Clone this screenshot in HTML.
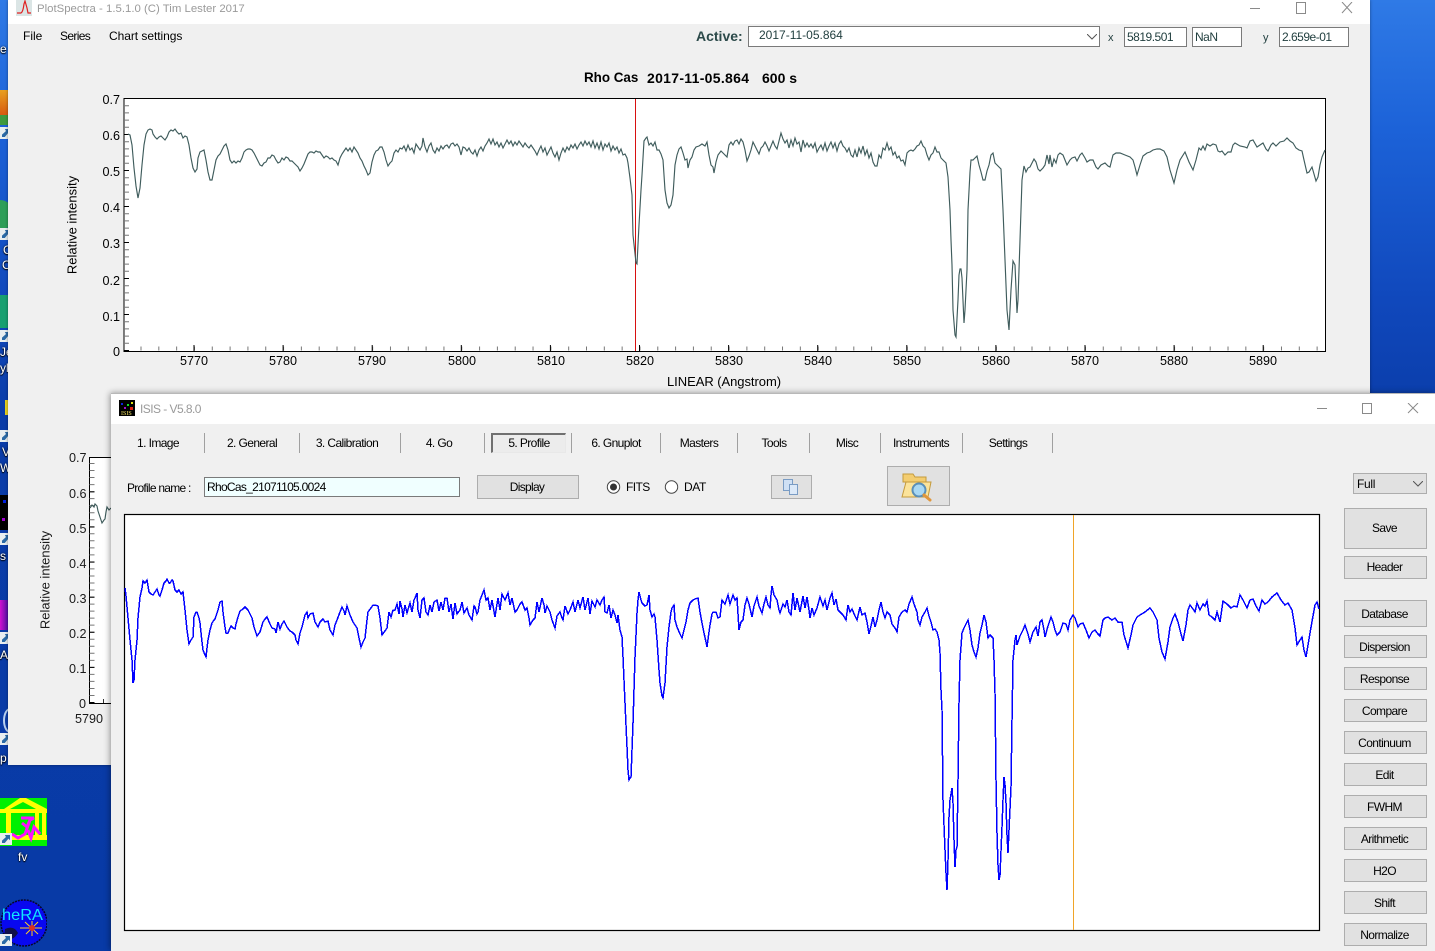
<!DOCTYPE html>
<html lang="en">
<head>
<meta charset="utf-8">
<title>PlotSpectra and ISIS</title>
<style>
html,body{margin:0;padding:0;width:1435px;height:951px;overflow:hidden;background:#0a3ca8;font-family:"Liberation Sans",sans-serif;color:#000}
div,span{position:absolute;box-sizing:border-box;white-space:pre}
svg{position:absolute}
#root{left:0;top:0;width:1435px;height:951px;overflow:hidden}
#bg{left:0;top:0;width:1435px;height:951px;background:linear-gradient(180deg,#2f7ae6 0,#1c62d8 130px,#1048bc 300px,#0a3ca8 420px,#083aa6 951px)}
.dk{color:#fff;font-size:12px;text-shadow:0 0 2px #000,0 1px 1px #000;line-height:14px}
.sc{width:12px;height:12px;background:#e8eef0;left:0}
.sc:after{content:"";position:absolute;left:2px;top:2px;width:8px;height:8px;background:#2b6aa6;clip-path:polygon(35% 0,100% 0,100% 65%,80% 45%,35% 100%,0 100%,0 70%,50% 25%)}
#w1{left:8px;top:0;width:1362px;height:765px;background:#f0f0f0;box-shadow:0 0 3px rgba(0,0,0,.4)}
#w2{left:111px;top:394px;width:1324px;height:557px;background:#f0f0f0;box-shadow:0 -1px 0 #b8b8b8,-1px -1px 6px rgba(0,0,0,.4)}
.tb{left:0;top:0;height:24px;background:#fff}
.t{color:#000;font-size:12px;line-height:14px}
.ax{font-size:13px;line-height:15px;color:#000}
.tk{font-size:12.6px;line-height:15px;color:#000}
.ct{transform:translateX(-50%)}
.box{background:#fff;border:1px solid #7a7a7a;font-size:12px;line-height:18px;color:#1f3d3d;padding-left:2px;letter-spacing:-.5px}
.btn{background:#e1e1e1;border:1px solid #adadad;left:1233px;width:83px;font-size:12px;letter-spacing:-.6px;text-align:center;color:#000;height:23px;line-height:23px;padding-right:2px}
.tab{top:42px;font-size:12px;line-height:14px;letter-spacing:-.6px;transform:translateX(-50%)}
.sep{top:39px;width:1px;height:20px;background:#a0a0a0}
.hd{top:70px;font-weight:bold;line-height:16px}
</style>
</head>
<body>
<div id="root">
<div id="bg"></div>

<div class="dk" style="left:0;top:42px">e</div>
<div style="left:0;top:90px;width:8px;height:25px;background:linear-gradient(180deg,#e9a020,#d85a10)"></div>
<div style="left:0;top:115px;width:8px;height:10px;background:#3f9a3f"></div>
<div class="sc" style="top:127px"></div>
<div style="left:-14px;top:200px;width:28px;height:30px;border-radius:50%;background:#2e9e58"></div>
<div class="sc" style="top:228px"></div>
<div class="dk" style="left:3px;top:243px">C</div>
<div class="dk" style="left:2px;top:258px">C</div>
<div style="left:0;top:295px;width:8px;height:33px;background:#18a070"></div>
<div class="sc" style="top:330px"></div>
<div class="dk" style="left:0;top:345px">Je</div>
<div class="dk" style="left:0;top:361px">yl</div>
<div style="left:5px;top:400px;width:3px;height:15px;background:#e8d020"></div>
<div class="sc" style="top:430px"></div>
<div class="dk" style="left:2px;top:445px">V</div>
<div class="dk" style="left:0;top:461px">Wo</div>
<div style="left:0;top:495px;width:8px;height:35px;background:#000"></div>
<div style="left:3px;top:500px;width:3px;height:3px;background:#0020e0"></div>
<div style="left:2px;top:518px;width:3px;height:3px;background:#a000d0"></div>
<div class="sc" style="top:533px"></div>
<div class="dk" style="left:0;top:549px">s</div>
<div style="left:0;top:600px;width:8px;height:30px;background:linear-gradient(90deg,#d010d0,#5010a0)"></div>
<div class="sc" style="top:632px"></div>
<div class="dk" style="left:0;top:648px">A</div>
<div style="left:3px;top:708px;width:14px;height:25px;border-radius:50%;border:2px solid #b8d0f0"></div>
<div class="sc" style="top:733px"></div>
<div class="dk" style="left:0;top:751px">p</div>

<svg style="left:0;top:798px" width="47" height="48" viewBox="0 0 47 48">
<rect width="47" height="48" fill="#00f000"/>
<path d="M0 11 L4 11 L20 0 L26 0 L47 11 L47 15 L0 15Z" fill="#ffff00"/>
<path d="M10 11 L23 4 L36 11Z" fill="#00f000"/>
<rect x="6" y="15" width="5" height="23" fill="#ffff00"/><rect x="35" y="15" width="4" height="23" fill="#ffff00"/><rect x="42" y="15" width="4" height="23" fill="#ffff00"/>
<rect y="37" width="47" height="5" fill="#ffff00"/>
<path d="M21 20 H34 L30 22 L27 29 L22 25 M30 22 L25 36 L18 40 L12 36 M28 32 L31 40 L34 29 L40 36" fill="none" stroke="#ff10ff" stroke-width="3"/>
</svg>
<div class="sc" style="top:833px"></div>
<div class="dk" style="left:18px;top:850px">fv</div>
<svg style="left:0;top:899px" width="47" height="48" viewBox="0 0 47 48">
<circle cx="24" cy="24" r="23" fill="#0808f0" stroke="#06062a" stroke-width="1.5" stroke-dasharray="2 1"/>
<path d="M5 30 Q14 26 18 34 Q12 44 4 38Z" fill="#101048"/>
<text x="2" y="21" font-family="Liberation Sans,sans-serif" font-size="16" textLength="41" lengthAdjust="spacingAndGlyphs" fill="#10e8ff">heRA</text>
<path d="M20 29 H42 M32 22 V37 M25 23 L38 35 M38 23 L26 35" stroke="#ffd020" stroke-width="1"/>
<circle cx="32" cy="29" r="3" fill="#e03020"/>
</svg>
<div class="sc" style="top:934px"></div>

<div id="w1">
  <div class="tb" style="width:1362px"></div>
  <svg style="left:8px;top:0" width="16" height="16" viewBox="0 0 16 16"><rect width="16" height="16" fill="#dbe5e5"/><path d="M1 13 H5 Q7 12 8 4 L9 1 L11 8 L12 13 H15" fill="none" stroke="#e02020" stroke-width="1.2"/></svg>
  <div class="t" style="left:29px;top:2px;color:#9a9a9a;font-size:11.4px">PlotSpectra - 1.5.1.0 (C) Tim Lester 2017</div>
  <svg style="left:1242px;top:2px" width="110" height="14" viewBox="0 0 110 14" fill="none" stroke="#8a8a8a"><path d="M0 6.5 H10"/><rect x="46.5" y=".5" width="9" height="11"/><path d="M92 0 L102 11 M102 0 L92 11"/></svg>
  <div class="t" style="left:15px;top:29px">File</div>
  <div class="t" style="left:52px;top:29px;letter-spacing:-.65px">Series</div>
  <div class="t" style="left:101px;top:29px;letter-spacing:-.05px">Chart settings</div>
  <div class="t" style="left:688px;top:29px;font-weight:bold;font-size:14px;color:#2c4a4a">Active:</div>
  <div class="box" style="left:740px;top:26px;width:352px;height:21px;padding-left:10px;letter-spacing:0;line-height:17px">2017-11-05.864</div>
  <svg style="left:1079px;top:34px" width="10" height="6"><path d="M0 0 L5 5 L10 0" fill="none" stroke="#555"/></svg>
  <div class="t" style="left:1100px;top:31px;font-size:11px;color:#1f3d3d">x</div>
  <div class="box" style="left:1116px;top:27px;width:63px;height:20px">5819.501</div>
  <div class="box" style="left:1184px;top:27px;width:50px;height:20px">NaN</div>
  <div class="t" style="left:1255px;top:31px;font-size:11px;color:#1f3d3d">y</div>
  <div class="box" style="left:1271px;top:27px;width:70px;height:20px">2.659e-01</div>
</div>

<div class="hd" style="left:584px;font-size:13.4px">Rho Cas</div>
<div class="hd" style="left:647px;font-size:14px;letter-spacing:.3px">2017-11-05.864</div>
<div class="hd" style="left:762px;font-size:14px">600 s</div>
<div class="tk" style="left:100px;top:93px;width:20px;text-align:right">0.7</div>
<div class="tk" style="left:100px;top:129px;width:20px;text-align:right">0.6</div>
<div class="tk" style="left:100px;top:165px;width:20px;text-align:right">0.5</div>
<div class="tk" style="left:100px;top:201px;width:20px;text-align:right">0.4</div>
<div class="tk" style="left:100px;top:237px;width:20px;text-align:right">0.3</div>
<div class="tk" style="left:100px;top:274px;width:20px;text-align:right">0.2</div>
<div class="tk" style="left:100px;top:310px;width:20px;text-align:right">0.1</div>
<div class="tk" style="left:100px;top:345px;width:20px;text-align:right">0</div>
<div class="ax" style="left:72px;top:225px;transform:translate(-50%,-50%) rotate(-90deg)">Relative intensity</div>
<div class="tk ct" style="left:194px;top:354px">5770</div>
<div class="tk ct" style="left:283px;top:354px">5780</div>
<div class="tk ct" style="left:372px;top:354px">5790</div>
<div class="tk ct" style="left:462px;top:354px">5800</div>
<div class="tk ct" style="left:551px;top:354px">5810</div>
<div class="tk ct" style="left:640px;top:354px">5820</div>
<div class="tk ct" style="left:729px;top:354px">5830</div>
<div class="tk ct" style="left:818px;top:354px">5840</div>
<div class="tk ct" style="left:907px;top:354px">5850</div>
<div class="tk ct" style="left:996px;top:354px">5860</div>
<div class="tk ct" style="left:1085px;top:354px">5870</div>
<div class="tk ct" style="left:1174px;top:354px">5880</div>
<div class="tk ct" style="left:1263px;top:354px">5890</div>
<div class="ax ct" style="left:724px;top:374px;letter-spacing:-.05px">LINEAR (Angstrom)</div>

<svg style="left:0;top:0" width="1435" height="951" viewBox="0 0 1435 951">
<rect x="124" y="98.5" width="1201.5" height="253" fill="#fff" stroke="#000" stroke-width="1"/>
<line x1="126.5" x2="126.5" y1="351" y2="99" stroke="#777" stroke-width="5" stroke-dasharray="1 6.2"/>
<line x1="126.5" x2="126.5" y1="351" y2="99" stroke="#000" stroke-width="5" stroke-dasharray="1 35"/>
<line x1="140.5" x2="1325" y1="348.5" y2="348.5" stroke="#777" stroke-width="4" stroke-dasharray="1 16.82"/>
<line x1="193.5" x2="1325" y1="348" y2="348" stroke="#000" stroke-width="6" stroke-dasharray="1 88.1"/>
<line x1="635.5" x2="635.5" y1="99" y2="351" stroke="#d81010" stroke-width="1"/>
<polyline fill="none" stroke="#3f5c5c" stroke-width="1.15" points="128,134 130,135 132,145 134,168 136,186 138,198 140,188 142,165 144,145 146,134 148,130 150,129 152,130 153,134 155,137 157,139 159,137 161,136 163,138 165,140 167,137 169,132 171,130 173,131 175,129 177,132 179,134 181,133 183,138 185,136 187,137 189,145 191,158 193,168 195,172 197,169 198,158 200,152 202,151 204,150 206,160 208,172 210,180 212,180 214,170 216,160 218,156 220,154 222,150 224,146 226,144 228,150 230,160 232,163 234,161 236,163 238,161 240,162 242,158 244,152 246,150 248,149 250,149 252,150 254,153 256,157 258,161 260,165 262,166 264,163 266,162 268,158 270,158 272,155 274,156 276,160 278,163 280,162 282,158 284,160 286,157 288,158 290,161 292,161 294,163 296,165 298,167 300,171 302,168 304,164 306,159 308,154 310,152 312,152 314,153 316,151 318,152 320,152 322,155 324,158 326,156 328,157 330,159 332,158 334,160 336,161 338,165 340,158 342,154 344,151 346,148 348,151 350,148 352,152 354,147 356,150 358,153 360,158 362,161 364,166 366,170 368,175 370,173 372,162 374,155 376,151 378,150 380,147 382,147 384,152 386,160 388,166 390,163 392,161 394,153 396,150 398,152 400,148 402,149 404,146 406,151 408,145 410,150 412,148 414,153 416,144 418,147 420,150 422,146 423,138 425,147 427,152 429,146 431,143 433,150 435,153 437,148 439,151 441,146 443,149 445,146 447,145 449,148 451,144 453,143 455,146 457,144 459,147 461,155 463,147 465,148 467,151 469,148 471,152 473,154 475,150 477,156 479,150 481,147 483,151 485,146 487,143 489,139 491,144 493,139 495,145 497,142 499,147 501,143 503,148 505,144 507,140 509,144 511,141 513,146 515,142 517,145 519,141 521,144 523,147 525,143 527,146 529,148 531,145 533,148 535,151 537,155 539,150 541,146 543,152 545,148 547,155 549,151 551,147 553,153 555,157 557,152 559,160 561,153 563,148 565,152 567,147 569,150 571,145 573,148 575,144 577,149 579,145 581,142 583,146 585,141 587,145 589,142 591,147 593,141 595,148 597,143 599,149 601,142 603,150 605,144 607,147 609,143 611,151 613,146 615,150 617,147 619,153 621,149 623,155 625,154 627,158 628,163 630,178 632,195 633,235 636,263 637,264 639,225 641,190 642,175 644,141 646,138 647,137 649,145 651,143 653,146 655,142 657,150 659,150 661,154 663,160 665,190 667,203 669,208 671,205 673,195 675,165 677,155 679,149 681,147 683,153 685,160 687,159 688,168 690,160 692,157 694,150 696,147 699,146 702,144 705,146 707,142 709,155 711,165 713,167 714,173 716,162 718,155 721,151 724,154 727,157 729,145 731,142 733,145 735,141 737,140 739,144 741,139 743,142 745,150 747,161 749,156 751,150 753,142 755,146 757,150 759,154 761,148 763,146 765,142 767,146 769,151 771,146 773,141 775,146 777,149 779,141 781,133 783,139 785,143 787,140 789,148 791,140 793,146 795,138 797,144 799,142 801,152 803,140 805,147 807,143 809,147 811,144 813,148 815,143 817,152 819,148 821,145 823,150 825,143 827,151 829,146 831,142 833,148 835,143 837,151 839,144 841,141 843,146 845,148 847,152 849,148 851,155 853,157 855,150 857,157 859,148 861,153 863,146 865,155 867,150 869,158 871,153 873,162 875,166 877,166 879,155 881,158 883,148 885,150 887,143 889,150 891,147 893,155 895,152 897,158 899,156 901,161 903,160 905,165 907,153 909,151 911,150 913,151 915,149 917,146 919,145 921,141 923,146 925,148 927,155 929,160 931,155 933,153 935,147 937,152 939,152 941,158 943,160 946,163 948,177 950,210 951,240 952,265 953,310 955,335 956,337 958,300 959,275 960,269 961,269 962,278 964,323 965,310 967,270 968,210 970,172 971,160 973,160 975,158 977,156 979,165 981,172 983,180 985,180 987,171 989,165 991,155 993,153 995,163 997,165 999,167 1001,169 1003,210 1005,260 1007,310 1009,330 1011,290 1013,261 1015,265 1017,313 1018,300 1019,270 1021,210 1022,180 1024,166 1026,172 1028,168 1030,167 1034,159 1036,162 1038,169 1040,171 1043,168 1045,165 1047,155 1049,164 1050,155 1052,167 1054,159 1056,163 1058,155 1060,153 1063,155 1067,165 1070,160 1072,158 1075,157 1077,161 1080,155 1082,153 1085,158 1087,162 1090,160 1093,160 1096,167 1098,169 1101,165 1105,163 1108,166 1110,167 1113,155 1116,153 1120,153 1125,155 1130,157 1133,160 1135,167 1137,175 1140,165 1143,156 1147,153 1150,152 1153,150 1157,149 1160,149 1164,151 1167,157 1170,170 1174,183 1177,170 1180,160 1185,152 1189,162 1193,170 1196,160 1199,148 1201,150 1203,146 1205,150 1207,144 1210,146 1213,144 1216,145 1218,151 1220,152 1222,151 1225,155 1228,152 1231,152 1233,145 1235,143 1240,146 1245,147 1247,148 1250,141 1253,140 1257,147 1260,145 1263,143 1266,149 1268,151 1271,145 1273,143 1276,146 1280,142 1284,141 1287,138 1290,141 1293,143 1296,148 1299,150 1302,151 1304,160 1307,173 1309,172 1312,167 1314,174 1316,181 1318,177 1320,165 1322,157 1325,150"/>

<rect x="89.5" y="457.5" width="40" height="246" fill="#fff" stroke="#000" stroke-width="1"/>
<line x1="92" x2="92" y1="703" y2="458" stroke="#777" stroke-width="5" stroke-dasharray="1 6.03"/>
<line x1="92" x2="92" y1="703" y2="458" stroke="#000" stroke-width="5" stroke-dasharray="1 34.1"/>
<line x1="103.5" x2="103.5" y1="699" y2="703" stroke="#333"/>
<polyline fill="none" stroke="#3f5c5c" stroke-width="1.15" points="90,508 92,505 94,507 95,504 97,506 98,511 100,517 102,523 104,520 105,519 106,512 107,507 109,510 111,508"/>
</svg>

<div class="tk" style="left:69px;top:451px;color:#1a1a1a">0.7</div>
<div class="tk" style="left:69px;top:487px;color:#1a1a1a">0.6</div>
<div class="tk" style="left:69px;top:522px;color:#1a1a1a">0.5</div>
<div class="tk" style="left:69px;top:557px;color:#1a1a1a">0.4</div>
<div class="tk" style="left:69px;top:592px;color:#1a1a1a">0.3</div>
<div class="tk" style="left:69px;top:627px;color:#1a1a1a">0.2</div>
<div class="tk" style="left:69px;top:662px;color:#1a1a1a">0.1</div>
<div class="tk" style="left:79px;top:697px;color:#1a1a1a">0</div>
<div class="tk ct" style="left:89px;top:712px;color:#1a1a1a">5790</div>
<div class="ax" style="left:45px;top:580px;transform:translate(-50%,-50%) rotate(-90deg);color:#1a1a1a">Relative intensity</div>

<div id="w2">
  <div class="tb" style="width:1324px;height:30px"></div>
  <svg style="left:8px;top:6px" width="16" height="16" viewBox="0 0 16 16"><rect width="16" height="16" fill="#000"/><rect x="2" y="3" width="2" height="2" fill="#1020e0"/><rect x="8" y="4" width="2" height="2" fill="#10e020"/><rect x="12" y="2" width="2" height="2" fill="#e0e010"/><rect x="5" y="7" width="2" height="2" fill="#a010d0"/><rect x="11" y="7" width="3" height="3" fill="#e02010"/><text x="2" y="15" font-size="6" font-family="Liberation Serif,serif" fill="#f0e060">ISIS</text></svg>
  <div class="t" style="left:29px;top:8px;color:#9a9a9a;letter-spacing:-.55px">ISIS - V5.8.0</div>
  <svg style="left:1206px;top:9px" width="104" height="14" viewBox="0 0 104 14" fill="none" stroke="#8a8a8a"><path d="M0 5.5 H10"/><rect x="45.5" y=".5" width="9" height="10"/><path d="M91 0 L101 10 M101 0 L91 10"/></svg>

  <div class="tab" style="left:47px">1. Image</div><div class="sep" style="left:93px"></div>
  <div class="tab" style="left:141px">2. General</div><div class="sep" style="left:188px"></div>
  <div class="tab" style="left:236px">3. Calibration</div><div class="sep" style="left:289px"></div>
  <div class="tab" style="left:328px">4. Go</div><div class="sep" style="left:373px"></div>
  <div style="left:380px;top:39px;width:75px;height:20px;background:#ececec;border:1px solid #e8e8e8;border-top:2px solid #707070;border-left:2px solid #707070"></div>
  <div class="tab" style="left:418px">5. Profile</div><div class="sep" style="left:460px"></div>
  <div class="tab" style="left:505px">6. Gnuplot</div><div class="sep" style="left:549px"></div>
  <div class="tab" style="left:588px">Masters</div><div class="sep" style="left:626px"></div>
  <div class="tab" style="left:663px">Tools</div><div class="sep" style="left:698px"></div>
  <div class="tab" style="left:736px">Misc</div><div class="sep" style="left:769px"></div>
  <div class="tab" style="left:810px">Instruments</div><div class="sep" style="left:851px"></div>
  <div class="tab" style="left:897px">Settings</div><div class="sep" style="left:941px"></div>

  <div class="t" style="left:16px;top:87px;letter-spacing:-.75px">Profile name :</div>
  <div class="box" style="left:93px;top:83px;width:256px;height:20px;background:#f0ffff;color:#000;letter-spacing:-.7px">RhoCas_21071105.0024</div>
  <div class="btn" style="left:366px;top:81px;width:102px;height:24px;line-height:22px;letter-spacing:-.7px">Display</div>
  <svg style="left:495px;top:85px" width="16" height="16"><circle cx="7.5" cy="8" r="6.2" fill="#fff" stroke="#444"/><circle cx="7.5" cy="8" r="3.5" fill="#333"/></svg>
  <div class="t" style="left:515px;top:86px;letter-spacing:-.6px">FITS</div>
  <svg style="left:553px;top:85px" width="16" height="16"><circle cx="7.5" cy="8" r="6.2" fill="#fff" stroke="#444"/></svg>
  <div class="t" style="left:573px;top:86px;letter-spacing:-.4px">DAT</div>
  <div class="btn" style="left:660px;top:81px;width:41px;height:24px"></div>
  <svg style="left:670px;top:85px" width="20" height="17" viewBox="0 0 20 17"><rect x="2.5" y=".5" width="9" height="11" fill="#cfe0f4" stroke="#7a9cc4"/><rect x="8.5" y="5.5" width="8" height="10" fill="#dce9f8" stroke="#7a9cc4"/></svg>
  <div class="btn" style="left:776px;top:72px;width:63px;height:40px"></div>
  <svg style="left:790px;top:76px" width="34" height="32" viewBox="0 0 34 32">
    <path d="M2 4 H12 L14 7 H25 V12 H2Z" fill="#f3cd70" stroke="#c49a3c"/>
    <path d="M1 27 L5 12 H30 L27 27Z" fill="#fbe39a" stroke="#c49a3c"/>
    <circle cx="18" cy="20" r="6.5" fill="#a8d8f4" stroke="#5a8fb8" stroke-width="2"/>
    <path d="M23 25 L29 30" stroke="#e0963c" stroke-width="3" stroke-linecap="round"/>
  </svg>

  <svg style="left:0;top:0" width="1324" height="557" viewBox="111 394 1324 557">
    <rect x="124.5" y="514.5" width="1195" height="416" fill="#fff" stroke="#000" stroke-width="1.2"/>
    <line x1="1073.5" x2="1073.5" y1="515" y2="930" stroke="#f0a428" stroke-width="1"/>
    <polyline fill="none" stroke="#0000ff" stroke-width="1.5" shape-rendering="crispEdges" points="125,588 126,596 128,618 130,640 132,660 133,683 134,680 135,660 137,640 138,618 140,597 142,588 143,581 145,583 147,580 149,592 151,594 153,595 155,592 157,589 159,595 160,596 162,590 164,583 166,581 167,579 169,583 170,583 172,580 173,581 175,590 177,592 179,590 181,594 183,592 185,610 187,630 189,644 191,640 193,637 194,617 196,612 197,612 199,618 200,623 202,642 203,650 205,655 206,657 207,648 208,640 210,630 212,623 214,620 215,619 218,610 220,602 222,601 223,612 225,627 226,633 228,633 230,628 231,626 233,628 235,629 236,624 238,617 240,611 243,609 245,607 247,609 248,610 250,614 252,618 254,627 257,636 260,632 263,622 265,619 267,617 270,624 272,628 275,629 276,633 278,622 280,629 282,624 284,621 287,627 290,631 292,632 295,635 296,640 298,644 300,633 302,627 305,615 307,612 308,618 310,614 313,613 315,622 318,627 320,622 323,619 325,622 328,621 330,630 333,635 335,625 337,620 340,612 342,607 344,611 345,615 347,606 349,612 350,615 353,622 357,628 359,638 361,647 363,642 365,638 367,620 368,612 371,608 373,605 375,605 378,606 380,618 382,635 385,631 387,628 389,612 391,617 393,610 395,610 397,604 399,614 400,601 402,609 403,617 405,605 407,613 410,603 412,612 414,600 415,598 417,593 418,610 420,618 422,600 424,598 426,612 428,615 430,605 432,612 434,602 437,600 439,611 441,602 443,610 445,598 447,598 449,612 451,604 453,619 455,603 457,614 460,610 462,602 464,613 467,608 469,615 472,620 474,606 475,607 477,614 478,612 480,600 482,595 484,590 486,600 488,598 490,610 492,600 495,617 497,604 498,598 500,610 502,594 505,600 508,593 510,605 512,598 515,612 517,610 520,604 522,602 525,610 527,608 529,618 530,625 533,620 535,618 537,602 539,612 542,598 544,605 545,613 547,606 550,612 552,620 555,628 557,616 560,612 562,618 563,620 565,606 568,614 570,610 573,602 575,612 578,600 580,608 583,597 585,610 588,598 590,614 592,601 595,607 597,600 600,605 602,600 604,597 605,612 607,613 609,605 611,618 613,610 615,615 617,623 618,615 620,630 622,637 623,657 625,703 627,747 628,770 629,780 630,778 631,777 633,723 635,657 637,613 638,600 639,592 641,600 642,603 645,606 647,605 649,595 650,610 652,617 654,614 655,617 657,640 659,670 660,683 662,696 663,698 665,683 667,647 669,627 671,612 672,608 674,605 675,620 677,627 680,634 682,638 684,630 686,622 688,610 690,603 693,600 695,599 698,598 700,612 702,623 703,628 704,633 706,642 707,647 709,632 710,625 712,614 713,612 716,612 718,618 720,617 722,600 725,604 728,595 730,604 733,595 735,600 737,598 739,630 741,622 743,620 745,605 747,598 749,604 752,617 754,606 757,597 759,606 762,613 764,604 766,597 768,605 770,608 771,595 772,586 774,595 777,600 779,610 780,613 783,604 785,607 787,600 789,612 791,615 793,593 795,610 797,598 800,612 803,596 805,608 807,597 809,610 810,618 812,608 814,615 817,608 820,597 823,606 825,600 827,610 830,598 832,593 834,605 836,599 838,610 840,612 843,615 846,620 848,605 850,612 852,609 855,616 857,620 860,607 862,615 865,613 867,622 869,634 871,626 873,617 875,627 877,620 879,610 881,602 883,612 885,618 887,612 890,615 892,624 895,628 897,632 899,617 902,612 905,610 907,612 909,604 912,597 914,604 917,612 918,620 920,625 922,617 925,612 927,608 929,616 931,622 933,630 935,629 937,632 939,640 940,653 941,690 942,710 943,800 945,850 946,873 947,890 948,860 949,817 950,800 952,788 953,803 954,840 955,867 956,850 957,847 958,780 959,703 960,660 962,633 964,628 966,624 968,620 970,630 972,645 974,652 976,657 978,648 980,633 982,625 984,615 986,622 988,638 990,635 993,638 994,660 995,693 996,780 997,833 998,865 999,880 1000,875 1002,827 1003,800 1004,777 1005,785 1006,803 1007,835 1008,853 1009,830 1011,787 1012,720 1013,660 1015,640 1016,635 1017,645 1020,636 1023,630 1025,625 1028,634 1030,642 1033,632 1036,627 1038,636 1040,622 1042,620 1044,630 1045,637 1048,626 1051,617 1053,622 1055,630 1057,635 1060,632 1063,623 1066,624 1068,630 1070,620 1073,615 1075,618 1078,627 1080,624 1083,623 1086,630 1089,638 1092,632 1095,630 1098,634 1100,636 1103,620 1105,618 1108,617 1112,620 1115,618 1118,622 1122,622 1124,635 1128,648 1131,635 1133,625 1137,617 1140,615 1145,612 1150,608 1153,612 1157,620 1159,638 1162,652 1165,659 1168,642 1170,627 1173,618 1175,614 1178,622 1181,634 1183,641 1186,625 1188,610 1190,605 1193,609 1195,612 1197,603 1200,610 1203,604 1205,606 1207,601 1209,615 1212,617 1215,620 1217,612 1220,622 1223,601 1227,604 1231,608 1234,606 1237,607 1240,595 1243,600 1247,608 1250,600 1253,599 1256,606 1259,611 1262,600 1265,604 1268,602 1272,597 1277,593 1281,600 1285,605 1288,603 1292,610 1295,628 1297,645 1300,640 1302,637 1304,650 1306,657 1308,645 1310,633 1313,616 1315,605 1317,602 1319,609"/>
  </svg>

  <div style="left:1242px;top:79px;width:74px;height:21px;background:#e1e1e1;border:1px solid #adadad;font-size:12px;line-height:21px;padding-left:3px;letter-spacing:-.3px">Full</div>
  <svg style="left:1302px;top:87px" width="10" height="6"><path d="M0 0 L5 5 L10 0" fill="none" stroke="#555"/></svg>
  <div class="btn" style="top:114px;height:41px;line-height:38px">Save</div>
  <div class="btn" style="top:162px;height:23px;line-height:20px">Header</div>
  <div class="btn" style="top:206px;height:27px;line-height:27px">Database</div>
  <div class="btn" style="top:241px">Dispersion</div>
  <div class="btn" style="top:273px">Response</div>
  <div class="btn" style="top:305px">Compare</div>
  <div class="btn" style="top:337px">Continuum</div>
  <div class="btn" style="top:369px">Edit</div>
  <div class="btn" style="top:401px">FWHM</div>
  <div class="btn" style="top:433px">Arithmetic</div>
  <div class="btn" style="top:465px">H2O</div>
  <div class="btn" style="top:497px">Shift</div>
  <div class="btn" style="top:529px">Normalize</div>
</div>
</div>
</body>
</html>
